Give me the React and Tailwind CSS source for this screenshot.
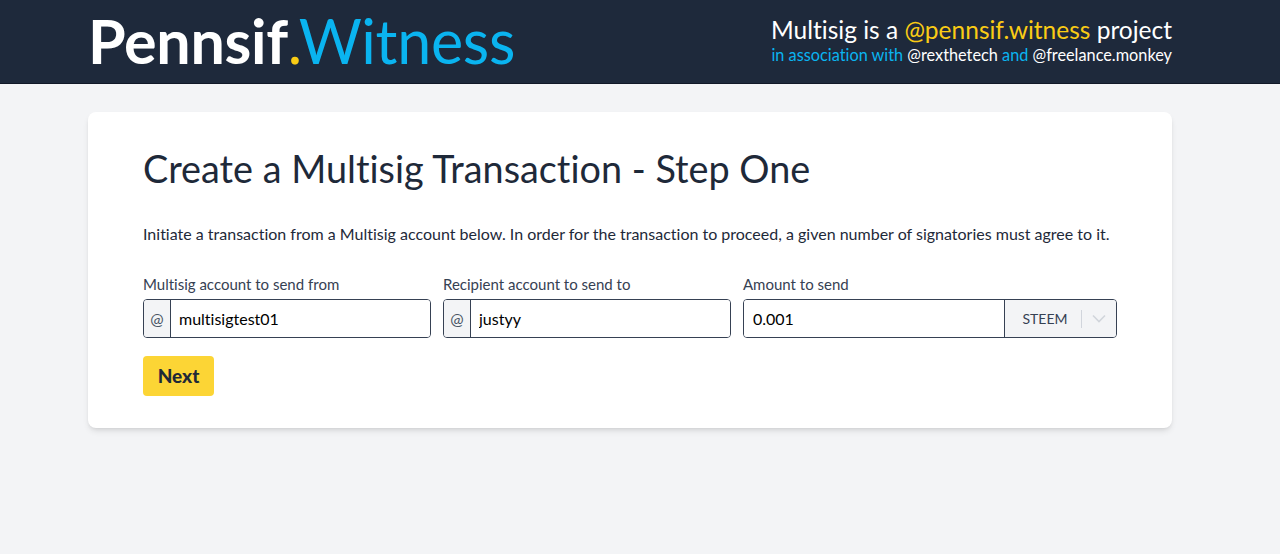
import React, { useState } from "react";

const font = { fontFamily: "Lato, 'Noto Sans', sans-serif" };

const AtInput = ({ label, value, onChange, width }) => (
  <div className={width}>
    <label className="block text-[15px] text-gray-700 mb-[5px] leading-[20px]">{label}</label>
    <div className="flex h-[39px] border border-gray-700 rounded-[4px] overflow-hidden">
      <span className="w-[27px] flex items-center justify-center bg-gray-100 border-r border-gray-700 text-gray-600 text-[16px]">
        @
      </span>
      <input
        type="text"
        value={value}
        onChange={(e) => onChange(e.target.value)}
        className="flex-1 px-[8px] text-[16px] text-black outline-none bg-white"
        style={font}
      />
    </div>
  </div>
);

const App = () => {
  const [from, setFrom] = useState("multisigtest01");
  const [to, setTo] = useState("justyy");
  const [amount, setAmount] = useState("0.001");

  return (
    <div className="min-h-[554px] bg-gray-100 [font-variant-ligatures:none]" style={font}>
      {/* Header */}
      <header className="h-[84px] bg-[#1e293b] border-b border-[#111827]">
        <div className="ml-[88px] w-[1084px] h-full flex items-center justify-between">
          <div className="text-[61px] leading-none tracking-[-0.3px] -mt-[2px]">
            <span className="font-bold text-white">Pennsif</span>
            <span className="text-[#facc15]">.</span>
            <span className="text-[#0ab4f0] font-normal">Witness</span>
          </div>
          <div className="text-right -mt-[4px]">
            <div className="text-[24.5px] leading-[30px] text-white">
              Multisig is a <span className="text-[#facc15]">@pennsif.witness</span> project
            </div>
            <div className="text-[16.3px] leading-[20px] text-white">
              <span className="text-[#0ab4f0]">in association with</span> @rexthetech{" "}
              <span className="text-[#0ab4f0]">and</span> @freelance.monkey
            </div>
          </div>
        </div>
      </header>

      {/* Card */}
      <main className="pt-[28px] ml-[88px] w-[1084px]">
        <div className="bg-white rounded-[8px] shadow-md px-[55px] pt-[33px] pb-[32px]">
          <h1 className="text-[37.8px] leading-[48px] text-gray-800 font-normal">
            Create a Multisig Transaction - Step One
          </h1>
          <p className="mt-[29px] text-[16px] leading-[24px] text-gray-800">
            Initiate a transaction from a Multisig account below. In order for the transaction to proceed, a given number of signatories must agree to it.
          </p>

          <div className="mt-[28px] flex gap-[12px]">
            <AtInput label="Multisig account to send from" value={from} onChange={setFrom} width="w-[288px]" />
            <AtInput label="Recipient account to send to" value={to} onChange={setTo} width="w-[288px]" />
            <div className="w-[374px]">
              <label className="block text-[15px] text-gray-700 mb-[5px] leading-[20px]">Amount to send</label>
              <div className="flex h-[39px] border border-gray-700 rounded-[4px] overflow-hidden">
                <input
                  type="text"
                  value={amount}
                  onChange={(e) => setAmount(e.target.value)}
                  className="flex-1 min-w-0 px-[9px] text-[16px] text-black outline-none bg-white"
                  style={font}
                />
                <div className="w-[112px] flex items-center bg-gray-100 border-l border-gray-700">
                  <span className="flex-1 text-center text-[14px] text-gray-700 pl-[4px]">STEEM</span>
                  <span className="h-[18px] w-px bg-gray-300" />
                  <span className="w-[34px] flex items-center justify-center">
                    <svg width="14" height="9" viewBox="0 0 14 9" fill="none">
                      <path d="M1 1.5l6 6 6-6" stroke="#d1d5db" strokeWidth="1.6" />
                    </svg>
                  </span>
                </div>
              </div>
            </div>
          </div>

          <button className="mt-[18px] h-[40px] w-[71px] bg-[#fcd535] rounded-[4px] text-[19px] font-black text-[#1f2937]">
            Next
          </button>
        </div>
      </main>
    </div>
  );
};

export default App;
